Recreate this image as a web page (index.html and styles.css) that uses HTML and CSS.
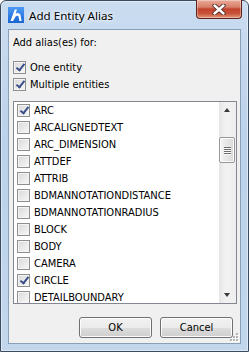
FILE: index.html
```html
<!DOCTYPE html>
<html lang="en">
<head>
    <meta charset="UTF-8">
    <title>Add Entity Alias</title>
    <link rel="stylesheet" href="styles.css">
</head>
<body>

    <div class="window">
        <div class="titlebar">
            <svg class="app-icon" width="16" height="16" viewBox="0 0 16 16">
                <defs>
                    <linearGradient id="ig" x1="0" y1="0" x2="0" y2="1">
                        <stop offset="0" stop-color="#4d9bf5"/>
                        <stop offset="1" stop-color="#1a64d2"/>
                    </linearGradient>
                </defs>
                <rect width="16" height="16" fill="url(#ig)"/>
                <path d="M2.5 14 L6.8 2.5 H9 L7.6 6.6 Q10.6 5 12.4 7.6 L13.6 14 H11.4 L10.6 9.6 Q9.8 8.2 8 9 L5 14 Z" fill="#fff"/>
            </svg>
            <span class="title">Add Entity Alias</span>
            <div class="close">
                <svg width="14" height="11" viewBox="0 0 14 11">
                    <path d="M2.5 1.5 L11.5 9.5 M11.5 1.5 L2.5 9.5" stroke="#4a2a24" stroke-width="4.2" stroke-linecap="round"/>
                    <path d="M2.5 1.5 L11.5 9.5 M11.5 1.5 L2.5 9.5" stroke="#fff" stroke-width="2.4" stroke-linecap="round"/>
                </svg>
            </div>
        </div>

        <div class="client">
            <div class="caption">Add alias(es) for:</div>
            <label class="option first"><span class="box on"></span>One entity</label>
            <label class="option"><span class="box on"></span>Multiple entities</label>

            <div class="listbox">
                <ul class="items">
                    <li><span class="box on"></span>ARC</li>
                    <li><span class="box"></span>ARCALIGNEDTEXT</li>
                    <li><span class="box"></span>ARC_DIMENSION</li>
                    <li><span class="box"></span>ATTDEF</li>
                    <li><span class="box"></span>ATTRIB</li>
                    <li><span class="box"></span>BDMANNOTATIONDISTANCE</li>
                    <li><span class="box"></span>BDMANNOTATIONRADIUS</li>
                    <li><span class="box"></span>BLOCK</li>
                    <li><span class="box"></span>BODY</li>
                    <li><span class="box"></span>CAMERA</li>
                    <li><span class="box on"></span>CIRCLE</li>
                    <li><span class="box"></span>DETAILBOUNDARY</li>
                </ul>
                <div class="scrollbar">
                    <div class="arrow up"></div>
                    <div class="thumb"><span></span><span></span><span></span><span></span></div>
                    <div class="track"></div>
                    <div class="arrow down"></div>
                </div>
            </div>

            <div class="buttons">
                <button>OK</button>
                <button>Cancel</button>
            </div>

            <svg class="grip" width="10" height="10" viewBox="0 0 10 10">
                <g fill="#fff">
                    <rect x="8" y="2" width="2" height="2"/><rect x="5" y="5" width="2" height="2"/><rect x="8" y="5" width="2" height="2"/>
                    <rect x="2" y="8" width="2" height="2"/><rect x="5" y="8" width="2" height="2"/><rect x="8" y="8" width="2" height="2"/>
                </g>
                <g fill="#b4b4b4">
                    <rect x="7" y="1" width="2" height="2"/><rect x="4" y="4" width="2" height="2"/><rect x="7" y="4" width="2" height="2"/>
                    <rect x="1" y="7" width="2" height="2"/><rect x="4" y="7" width="2" height="2"/><rect x="7" y="7" width="2" height="2"/>
                </g>
            </svg>
        </div>
    </div>

</body>
</html>
```

FILE: styles.css
```css
body{
    margin: 0;
    background: #fff;
}

.window{
    width: 249px;
    height: 352px;
    box-sizing: border-box;
    display: flex;
    flex-direction: column;
    padding: 0 7px 7px;
    border: 1px solid #3c4c60;
    border-radius: 6px 6px 0 0;
    background: linear-gradient(#cadcf0, #bcd2ea 40%, #c2d7ec);
    box-shadow: inset 0 0 0 1px rgba(255,255,255,0.45);
}

.titlebar{
    height: 28px;
    display: flex;
    align-items: center;
}

.app-icon{
    flex: none;
}

.title{
    margin-left: 5px;
    font-family: "Noto Sans", sans-serif;
    font-size: 11.6px;
    color: #000;
    text-shadow: 0 0 6px #fff, 0 0 3px #fff;
}

.close{
    margin-left: auto;
    margin-right: -1px;
    align-self: flex-start;
    margin-top: -1px;
    width: 44px;
    height: 18px;
    border: 1px solid #5b2219;
    border-top: 0;
    border-radius: 0 0 4px 4px;
    background: linear-gradient(#eaab99 0%, #d77e68 40%, #c2432c 50%, #c9533a 75%, #e39877 100%);
    box-shadow: inset 0 0 0 1px rgba(255,255,255,0.35);
    display: flex;
    align-items: center;
    justify-content: center;
}

.client{
    flex: 1;
    position: relative;
    display: flex;
    flex-direction: column;
    padding: 6px 3px 0 4px;
    border: 1px solid #8a9fb8;
    background: #f0f0f0;
    font-family: "DejaVu Sans Condensed", "DejaVu Sans", sans-serif;
    font-size: 11px;
    color: #000;
}

.caption{
    line-height: 13px;
}

.option{
    display: flex;
    align-items: center;
    height: 17px;
    line-height: 17px;
}

.option.first{
    margin-top: 10px;
}

.box{
    flex: none;
    width: 11px;
    height: 11px;
    margin-right: 4px;
    border: 1px solid #8e8f8f;
    background: linear-gradient(135deg, #d9d9d9, #f8f8f8);
    box-shadow: inset 0 0 0 1px #f4f4f4;
    position: relative;
}

.box.on::after{
    content: '';
    position: absolute;
    left: 4px;
    top: 0px;
    width: 3px;
    height: 7px;
    border: solid #3b4f8a;
    border-width: 0 2px 2px 0;
    transform: rotate(38deg);
}

.listbox{
    margin-top: 8px;
    height: 203px;
    box-sizing: border-box;
    border: 1px solid #828790;
    background: #fff;
    display: flex;
}

.items{
    flex: 1;
    margin: 0;
    padding: 0 0 0 3px;
    list-style: none;
    overflow: hidden;
}

.items li{
    height: 17px;
    display: flex;
    align-items: center;
    white-space: nowrap;
}

.scrollbar{
    width: 17px;
    flex: none;
    display: flex;
    flex-direction: column;
    background: linear-gradient(to right, #e6e6e6, #f2f2f2 40%, #eeeeee);
}

.arrow{
    height: 17px;
    position: relative;
}

.arrow::after{
    content: '';
    position: absolute;
    left: 5px;
    top: 6px;
    border-left: 3.5px solid transparent;
    border-right: 3.5px solid transparent;
}

.arrow.up::after{
    border-bottom: 4px solid #3a3a3a;
}

.arrow.down::after{
    top: 7px;
    border-top: 4px solid #3a3a3a;
}

.thumb{
    margin: 18px 1px 0 0;
    height: 24px;
    border: 1px solid #979797;
    border-radius: 2px;
    background: linear-gradient(to right, #f4f4f4, #e6e6e6 50%, #d9d9d9);
    box-shadow: inset 0 0 0 1px #fbfbfb;
    display: flex;
    flex-direction: column;
    align-items: center;
    justify-content: center;
    gap: 1px;
}

.thumb span{
    width: 7px;
    height: 1px;
    background: #6e6e6e;
    box-shadow: 0 1px 0 #fafafa;
}

.track{
    flex: 1;
}

.buttons{
    margin: 13px 4px 0 0;
    display: flex;
    justify-content: flex-end;
    gap: 8px;
}

button{
    width: 73px;
    height: 21px;
    padding: 0;
    border: 1px solid #707070;
    border-radius: 3px;
    background: linear-gradient(#f2f2f2 0%, #ebebeb 50%, #dddddd 50%, #cfcfcf 100%);
    box-shadow: inset 0 0 0 1px #fbfbfb;
    font-family: "DejaVu Sans Condensed", "DejaVu Sans", sans-serif;
    font-size: 11px;
    color: #000;
}

.grip{
    position: absolute;
    right: 1px;
    bottom: 1px;
}
```
